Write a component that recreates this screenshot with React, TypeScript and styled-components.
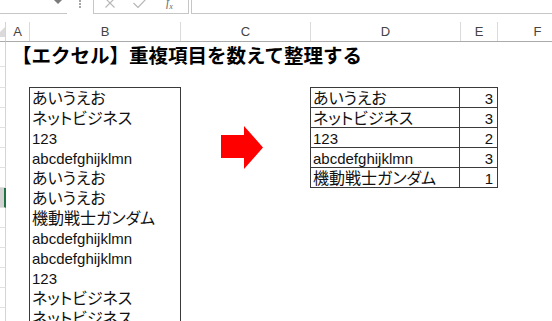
import styled, { createGlobalStyle } from 'styled-components'

const GlobalStyle = createGlobalStyle`
    html, body {
        margin: 0;
        padding: 0;
        background: #FFF;
        overflow: hidden;
    }
    body {
        width: 552px;
        height: 321px;
        font-family: "Liberation Sans", "Noto Sans CJK JP", sans-serif;
    }
`

const FormulaBar = styled.div`
    display: flex;
    height: 14px;
`

const NameBox = styled.div`
    width: 67px;
    box-sizing: border-box;
    border-bottom: 1px solid #C6C6C6;
    display: flex;
    justify-content: flex-end;
    padding-right: 5px;
`

const DropArrow = styled.div`
    width: 0;
    height: 0;
    border-left: 4px solid transparent;
    border-right: 4px solid transparent;
    border-top: 4px solid #7A7A7A;
`

const Grip = styled.div`
    width: 26px;
    display: flex;
    flex-direction: column;
    align-items: center;
    gap: 1px;
    span {
        width: 2px;
        height: 2px;
        background: #A6A6A6;
    }
`

const FxBox = styled.div`
    width: 96px;
    box-sizing: border-box;
    border-left: 1px solid #C6C6C6;
    border-right: 1px solid #C6C6C6;
    border-bottom: 1px solid #C6C6C6;
    display: flex;
    align-items: flex-start;
    gap: 18px;
    padding-left: 11px;
    overflow: hidden;
    svg {
        margin-top: -2px;
    }
`

const FxLabel = styled.div`
    margin-top: -5px;
    margin-left: 1px;
    font-family: "Liberation Serif", serif;
    font-style: italic;
    font-size: 12px;
    color: #6A6A6A;
    sub {
        font-size: 8px;
    }
`

const FormulaInput = styled.div`
    flex: 1;
    margin-left: 2px;
    border-left: 1px solid #C6C6C6;
    border-bottom: 1px solid #C6C6C6;
`

const Sheet = styled.div`
    margin-top: 8px;
    display: flex;
`

const Gutter = styled.div`
    width: 8px;
    display: flex;
    flex-direction: column;
`

const Corner = styled.div`
    height: 20px;
    box-sizing: border-box;
    border-bottom: 1px solid #ABABAB;
    border-right: 1px solid #D4D4D4;
    display: flex;
    align-items: flex-end;
    padding-bottom: 4px;
    overflow: hidden;
`

const CornerMark = styled.div`
    margin-left: -5px;
    width: 0;
    height: 0;
    border-bottom: 10px solid #DADADA;
    border-left: 10px solid transparent;
`

const RowHead = styled.div<{ $h: number; $selected?: boolean }>`
    height: ${p => p.$h}px;
    flex-shrink: 0;
    box-sizing: border-box;
    border-bottom: 1px solid #E1E1E1;
    border-right: ${p => p.$selected ? '2px solid #217346' : '1px solid #D4D4D4'};
    background: ${p => p.$selected ? '#D2D2D2' : '#FFF'};
`

const Main = styled.div`
    flex: 1;
    display: flex;
    flex-direction: column;
`

const HeaderRow = styled.div`
    display: flex;
    height: 20px;
    box-sizing: border-box;
    border-bottom: 1px solid #ABABAB;
`

const HeaderCell = styled.div<{ $w: number }>`
    width: ${p => p.$w}px;
    flex-shrink: 0;
    box-sizing: border-box;
    border-right: 1px solid #DADADA;
    display: flex;
    align-items: center;
    justify-content: center;
    font-family: "Liberation Sans", sans-serif;
    font-size: 13px;
    color: #444;
`

const TitleRow = styled.div`
    height: 25px;
    padding-left: 6px;
    box-sizing: border-box;
    font-family: "Noto Sans CJK JP", sans-serif;
    font-weight: 700;
    font-size: 19.5px;
    line-height: 25px;
    color: #000;
    white-space: nowrap;
`

const Content = styled.div`
    margin-top: 20px;
    padding-left: 23px;
    display: flex;
    align-items: flex-start;
`

const ListBox = styled.div`
    width: 152px;
    box-sizing: border-box;
    border: 1px solid #3A3A3A;
`

const Cell = styled.div<{ $right?: boolean; $latin?: boolean }>`
    height: 20px;
    box-sizing: border-box;
    padding: 1px ${p => p.$right ? '4px' : '0'} 0 2px;
    font-size: ${p => p.$latin ? '15px' : '16px'};
    line-height: 19px;
    color: #111;
    white-space: nowrap;
    text-align: ${p => p.$right ? 'right' : 'left'};
    font-feature-settings: "palt";
`

const ArrowCell = styled.div`
    width: 129px;
    padding: 39px 0 0 40px;
    box-sizing: border-box;
`

const SummaryTable = styled.div`
    width: 188px;
    box-sizing: border-box;
    border: 1px solid #3A3A3A;
    border-bottom: none;
    display: grid;
    grid-template-columns: 149px 1fr;
    ${Cell} {
        border-bottom: 1px solid #3A3A3A;
    }
    ${Cell}:nth-child(odd) {
        border-right: 1px solid #3A3A3A;
    }
`

const items = [
    'あいうえお',
    'ネットビジネス',
    '123',
    'abcdefghijklmn',
    'あいうえお',
    'あいうえお',
    '機動戦士ガンダム',
    'abcdefghijklmn',
    'abcdefghijklmn',
    '123',
    'ネットビジネス',
    'ネットビジネス'
]

const columns = [
    { name: 'A', w: 24 },
    { name: 'B', w: 151 },
    { name: 'C', w: 130 },
    { name: 'D', w: 150 },
    { name: 'E', w: 37 },
    { name: 'F', w: 80 }
]

const isLatin = (s: string) => /^[\x00-\x7F]+$/.test(s)

const App = () => {
    const counts: { name: string; count: number }[] = []
    items.forEach(item => {
        const found = counts.find(c => c.name === item)
        if (found) found.count++
        else counts.push({ name: item, count: 1 })
    })

    const rowHeights = [25, 21, ...Array(12).fill(20)]

    return (
        <>
            <GlobalStyle />
            <FormulaBar>
                <NameBox>
                    <DropArrow />
                </NameBox>
                <Grip>
                    <span />
                    <span />
                    <span />
                </Grip>
                <FxBox>
                    <svg width="10" height="10" viewBox="0 0 10 10">
                        <path d="M0.5 0.5 L9.5 9.5 M9.5 0.5 L0.5 9.5" stroke="#B8B8B8" strokeWidth="1.2" fill="none" />
                    </svg>
                    <svg width="14" height="10" viewBox="0 0 14 10">
                        <path d="M0.5 5 L5 9.5 L13.5 0.5" stroke="#B8B8B8" strokeWidth="1.2" fill="none" />
                    </svg>
                    <FxLabel>f<sub>x</sub></FxLabel>
                </FxBox>
                <FormulaInput />
            </FormulaBar>

            <Sheet>
                <Gutter>
                    <Corner>
                        <CornerMark />
                    </Corner>
                    {rowHeights.map((h, i) => (
                        <RowHead key={i} $h={h} $selected={i === 7} />
                    ))}
                </Gutter>

                <Main>
                    <HeaderRow>
                        {columns.map(c => (
                            <HeaderCell key={c.name} $w={c.w}>{c.name}</HeaderCell>
                        ))}
                    </HeaderRow>

                    <TitleRow>【エクセル】重複項目を数えて整理する</TitleRow>

                    <Content>
                        <ListBox>
                            {items.map((item, i) => (
                                <Cell key={i} $latin={isLatin(item)}>{item}</Cell>
                            ))}
                        </ListBox>

                        <ArrowCell>
                            <svg width="42" height="43" viewBox="0 0 42 43">
                                <polygon points="0,9 23,9 23,0 42,21.5 23,43 23,32 0,32" fill="#FF0000" />
                            </svg>
                        </ArrowCell>

                        <SummaryTable>
                            {counts.map(c => [
                                <Cell key={c.name} $latin={isLatin(c.name)}>{c.name}</Cell>,
                                <Cell key={c.name + '-n'} $right $latin>{c.count}</Cell>
                            ])}
                        </SummaryTable>
                    </Content>
                </Main>
            </Sheet>
        </>
    )
}

export default App
